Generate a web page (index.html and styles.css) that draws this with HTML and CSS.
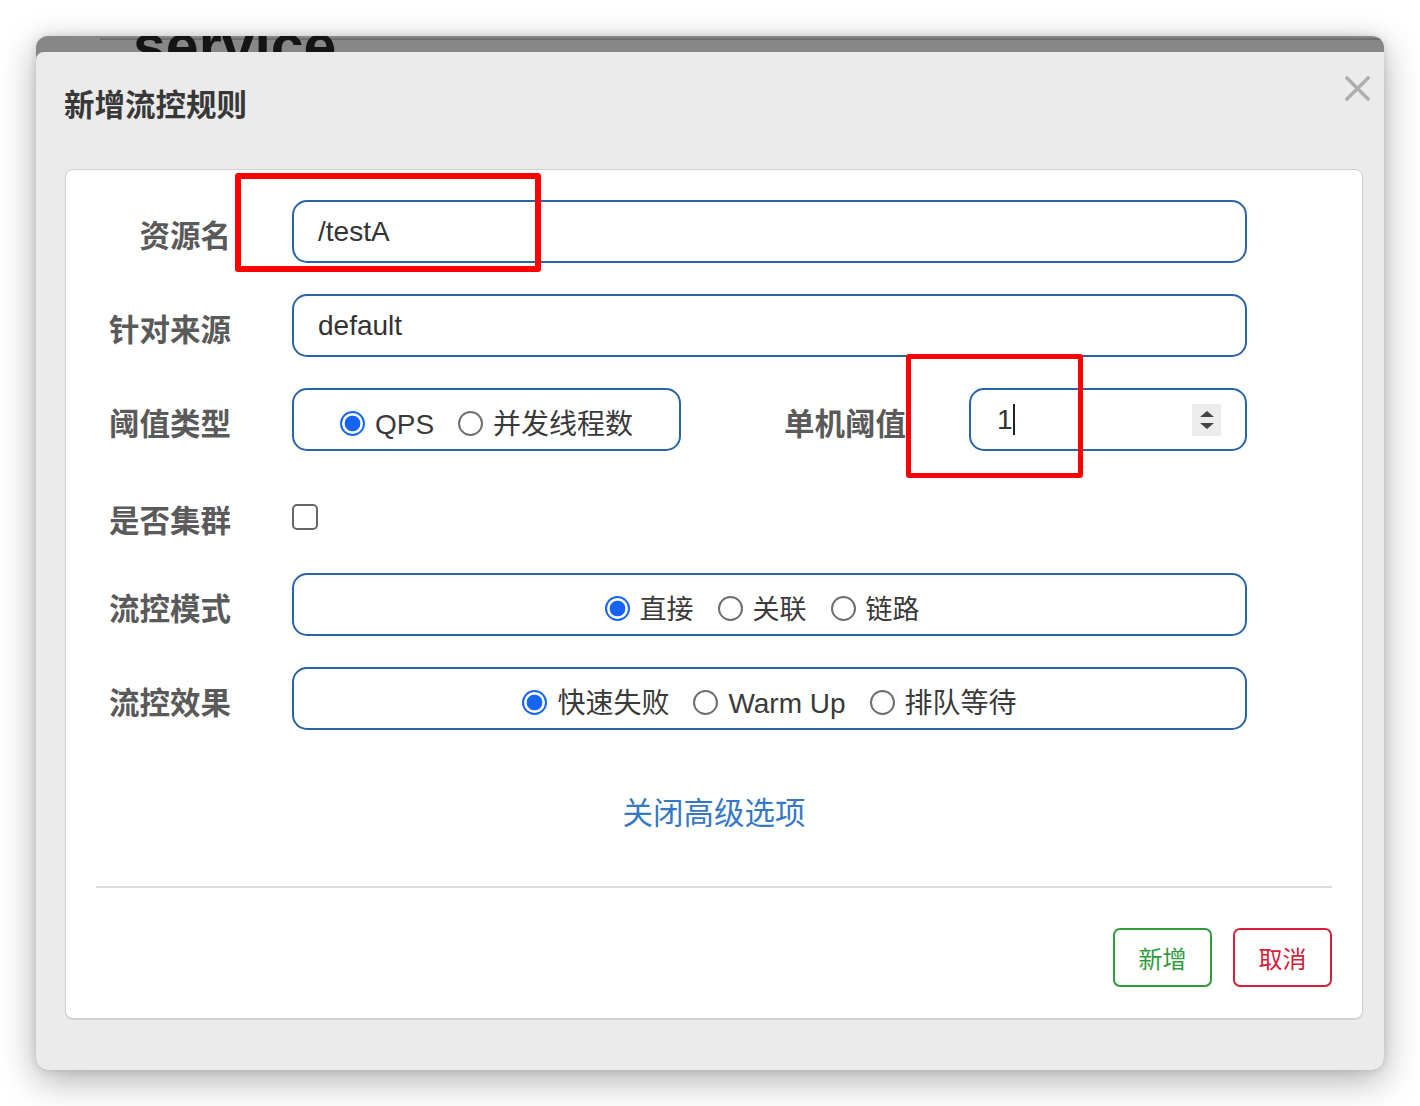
FILE: index.html
```html
<!DOCTYPE html>
<html lang="zh-CN">
<head>
<meta charset="utf-8">
<title>新增流控规则</title>
<link rel="stylesheet" href="styles.css">
</head>
<body>
<div class="window">
  <div class="strip">
    <div class="strip-bar"><div class="strip-text">service</div></div>
  </div>
  <div class="modal">
    <div class="modal-header">
      <h4 class="modal-title">新增流控规则</h4>
      <div class="close">
        <svg width="25" height="25" viewBox="0 0 25 25"><path d="M2 2 L23 23 M23 2 L2 23" stroke="#aeaeae" stroke-width="3.4" stroke-linecap="square"/></svg>
      </div>
    </div>
    <div class="card">
      <div class="row">
        <div class="label">资源名</div>
        <div class="control input"><span class="value">/testA</span></div>
      </div>
      <div class="row">
        <div class="label">针对来源</div>
        <div class="control input"><span class="value">default</span></div>
      </div>
      <div class="row">
        <div class="label">阈值类型</div>
        <div class="control split">
          <div class="radio-group small">
            <span class="radio on"></span><span class="rtext">QPS</span>
            <span class="radio"></span><span class="rtext">并发线程数</span>
          </div>
          <div class="label label-mid">单机阈值</div>
          <div class="input number">
            <span class="value">1</span><span class="caret"></span>
            <span class="spin"><span class="up"></span><span class="down"></span></span>
          </div>
        </div>
      </div>
      <div class="row row-check">
        <div class="label">是否集群</div>
        <div class="control"><span class="checkbox"></span></div>
      </div>
      <div class="row">
        <div class="label">流控模式</div>
        <div class="control radio-group mode">
          <span class="radio on"></span><span class="rtext cjk27">直接</span>
          <span class="radio"></span><span class="rtext cjk27">关联</span>
          <span class="radio"></span><span class="rtext cjk27">链路</span>
        </div>
      </div>
      <div class="row">
        <div class="label">流控效果</div>
        <div class="control radio-group">
          <span class="radio on"></span><span class="rtext">快速失败</span>
          <span class="radio"></span><span class="rtext">Warm Up</span>
          <span class="radio"></span><span class="rtext">排队等待</span>
        </div>
      </div>
      <div class="advanced"><a class="link">关闭高级选项</a></div>
      <div class="divider"></div>
      <div class="actions">
        <button class="btn btn-add">新增</button>
        <button class="btn btn-cancel">取消</button>
      </div>
    </div>
  </div>
</div>
<div class="mark mark-1"></div>
<div class="mark mark-2"></div>
</body>
</html>
```
FILE: styles.css
```css
* { box-sizing: border-box; }
html, body { margin: 0; padding: 0; background: #ffffff; }
body {
  font-family: "Liberation Sans", "Noto Sans CJK SC", sans-serif;
  color: #333;
  width: 1420px;
  height: 1106px;
  overflow: hidden;
  position: relative;
}
.window {
  margin: 36px 0 0 36px;
  width: 1348px;
  border-radius: 12px;
  overflow: hidden;
  background: #878787;
  box-shadow: 0 10px 36px rgba(0,0,0,0.32), 0 0 8px rgba(0,0,0,0.12);
}
.strip {
  height: 16px;
  overflow: hidden;
  padding-left: 64px;
}
.strip-bar {
  margin-top: 2px;
  border-top: 2px solid #6f6f6f;
}
.strip-text {
  margin-top: -23px;
  padding-left: 33px;
  font-family: "Liberation Sans", sans-serif;
  font-weight: 700;
  font-size: 59px;
  line-height: 59px;
  color: #141414;
}
.modal {
  background: #ebebeb;
  border-top-left-radius: 8px;
  padding: 0 21px 51px 29px;
}
.modal-header {
  display: flex;
  align-items: flex-start;
  justify-content: space-between;
  padding: 24px 0 0 0;
}
.modal-title {
  margin: 7px 0 0 -1px;
  font-family: "Noto Sans CJK SC", sans-serif;
  font-size: 30.5px;
  line-height: 40px;
  font-weight: 600;
  color: #383838;
}
.close {
  width: 25px;
  height: 25px;
  margin-right: -7px;
  display: flex;
}
.card {
  margin-top: 46px;
  background: #fff;
  border: 1px solid #cfcfcf;
  border-radius: 8px;
  box-shadow: 0 1px 1px rgba(0,0,0,0.10);
  padding: 30px 30px 31px 30px;
}
.row {
  display: flex;
  align-items: center;
  height: 63px;
  margin-bottom: 31px;
}
.row-check {
  height: 60px;
  padding-top: 10px;
}
.label {
  width: 135px;
  margin-right: 61px;
  text-align: right;
  font-family: "Noto Sans CJK SC", sans-serif;
  font-size: 30.5px;
  line-height: 40px;
  font-weight: 600;
  color: #5a5a5a;
  padding-top: 4px;
  white-space: nowrap;
}
.control {
  width: 955px;
  height: 63px;
  display: flex;
  align-items: center;
}
.row-check .control { height: 50px; }
.input {
  border: 2px solid #2b63a7;
  border-radius: 15px;
  padding-left: 24px;
  font-size: 28px;
  color: #333;
  height: 63px;
  display: flex;
  align-items: center;
}
.split { justify-content: flex-start; }
.label-mid {
  width: auto;
  flex: 1;
  margin-right: 63px;
}
.number {
  width: 278px;
  flex: none;
  padding-left: 26px;
  padding-right: 24px;
}
.caret {
  width: 2px;
  height: 31px;
  background: #222;
  margin-left: 0;
}
.spin {
  margin-left: auto;
  width: 29px;
  height: 32px;
  background: #ececec;
  border-radius: 2px;
  display: flex;
  flex-direction: column;
  align-items: center;
  justify-content: center;
  gap: 6px;
}
.up, .down {
  width: 0; height: 0;
  border-left: 7px solid transparent;
  border-right: 7px solid transparent;
}
.up { border-bottom: 6px solid #444; }
.down { border-top: 6px solid #444; }
.radio-group {
  border: 2px solid #2b63a7;
  border-radius: 15px;
  height: 63px;
  display: flex;
  align-items: center;
  justify-content: center;
  padding-top: 7px;
  font-size: 28px;
  color: #3a3a3a;
  font-family: "Liberation Sans", "Noto Sans CJK SC", sans-serif;
}
.radio-group.mode { padding-right: 15px; }
.radio-group.small { width: 389px; flex: none; }
.radio {
  width: 25px;
  height: 25px;
  border-radius: 50%;
  border: 2px solid #6e6e6e;
  background: #fff;
  flex: none;
  margin-left: 24px;
  margin-right: 10px;
}
.radio:first-child { margin-left: 0; }
.radio.on {
  border: 2px solid #1565f2;
  background: radial-gradient(circle, #1565f2 0 7.5px, #fff 8.2px);
}
.rtext { line-height: 40px; white-space: nowrap; padding-top: 4px; }
.cjk27 { font-size: 27px; }
.checkbox {
  width: 26px;
  height: 26px;
  border: 2px solid #666;
  border-radius: 5px;
  background: #fff;
}
.advanced {
  margin-top: 61px;
  text-align: center;
  font-family: "Noto Sans CJK SC", sans-serif;
  font-size: 30.5px;
  line-height: 40px;
}
.link { color: #3579c6; text-decoration: none; }
.divider {
  margin-top: 55px;
  height: 2px;
  background: #dcdcdc;
}
.actions {
  margin-top: 40px;
  display: flex;
  justify-content: flex-end;
  gap: 21px;
}
.btn {
  width: 99px;
  height: 59px;
  background: #fff;
  border-radius: 7px;
  font-family: "Noto Sans CJK SC", sans-serif;
  font-size: 24px;
  padding: 0;
  cursor: pointer;
}
.btn-add { border: 2px solid #2e9c3c; color: #2e9c3c; }
.btn-cancel { border: 2px solid #d42038; color: #d42038; }
.mark {
  position: absolute;
  border-style: solid;
  border-color: #ff0000;
  border-radius: 3px;
}
.mark-1 { left: 235px; top: 173px; width: 306px; height: 99px; border-width: 6px; }
.mark-2 { left: 906px; top: 354px; width: 177px; height: 124px; border-width: 5px; }
```
